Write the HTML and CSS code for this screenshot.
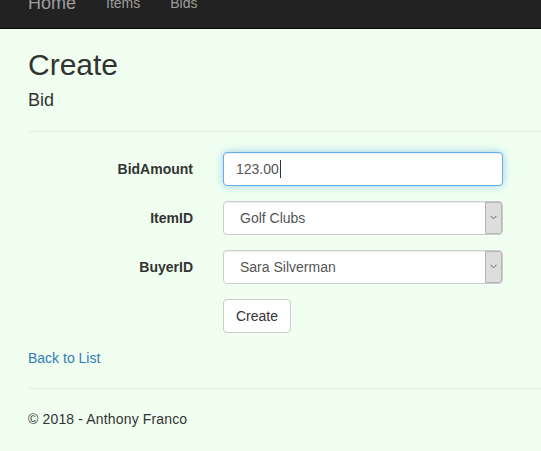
FILE: index.html
```html
<!DOCTYPE html>
<html>
<head>
<meta charset="utf-8">
<title>Create - Bid</title>
<link rel="stylesheet" href="styles.css">
</head>
<body>
<nav class="navbar">
  <a class="brand" href="#">Home</a>
  <a class="nav-link" href="#">Items</a>
  <a class="nav-link" href="#">Bids</a>
</nav>
<main class="content">
  <h2 class="title">Create</h2>
  <h4 class="subtitle">Bid</h4>
  <hr class="rule">
  <form class="form">
    <div class="form-group">
      <label class="control-label">BidAmount</label>
      <div class="field">
        <input class="form-control focused" type="text" value="123.00">
        <span class="caret"></span>
      </div>
    </div>
    <div class="form-group">
      <label class="control-label">ItemID</label>
      <div class="field">
        <select class="form-control select"><option>Golf Clubs</option></select>
        <span class="arrow"><svg width="7" height="5" viewBox="0 0 7 5"><path d="M0.5 0.8 L3.5 3.8 L6.5 0.8" fill="none" stroke="#666" stroke-width="1"/></svg></span>
      </div>
    </div>
    <div class="form-group">
      <label class="control-label">BuyerID</label>
      <div class="field">
        <select class="form-control select"><option>Sara Silverman</option></select>
        <span class="arrow"><svg width="7" height="5" viewBox="0 0 7 5"><path d="M0.5 0.8 L3.5 3.8 L6.5 0.8" fill="none" stroke="#666" stroke-width="1"/></svg></span>
      </div>
    </div>
    <div class="form-group">
      <span class="control-label"></span>
      <div class="field"><button class="btn" type="button">Create</button></div>
    </div>
  </form>
  <div class="back"><a href="#">Back to List</a></div>
  <hr class="rule">
  <footer class="footer"><p>&copy; 2018 - Anthony Franco</p></footer>
</main>
</body>
</html>
```

FILE: styles.css
```css
* { box-sizing: border-box; }
html, body { margin: 0; padding: 0; }
body {
  background: #f0fff0;
  font-family: "Liberation Sans", Arial, Helvetica, sans-serif;
  font-size: 14px;
  line-height: 20px;
  color: #333;
  overflow: hidden;
}
.navbar {
  margin-top: -22px;
  height: 51px;
  background: #222;
  border-bottom: 1px solid #080808;
  display: flex;
  align-items: flex-start;
  padding-left: 13px;
}
.brand {
  font-size: 18px;
  line-height: 20px;
  padding: 15px;
  color: #9d9d9d;
  text-decoration: none;
}
.nav-link {
  font-size: 14px;
  line-height: 20px;
  padding: 15px;
  color: #9d9d9d;
  text-decoration: none;
}
.content {
  padding-left: 28px;
}
.title {
  margin: 19px 0 10px;
  font-size: 30px;
  line-height: 33px;
  font-weight: 500;
}
.subtitle {
  margin: 10px 0 10px;
  font-size: 18px;
  line-height: 19.8px;
  font-weight: 500;
}
.rule {
  margin: 20px 0;
  border: 0;
  border-top: 1px solid #e8eee8;
  height: 0;
}
.form { margin: 0; }
.form-group {
  display: grid;
  grid-template-columns: 165px 280px;
  column-gap: 30px;
  margin-bottom: 15px;
}
.control-label {
  text-align: right;
  font-weight: bold;
  padding-top: 7px;
}
.field { position: relative; }
.form-control {
  display: block;
  width: 280px;
  height: 34px;
  padding: 6px 12px;
  font-family: "Liberation Sans", Arial, sans-serif;
  font-size: 14px;
  color: #555;
  background: #fff;
  border: 1px solid #ccc;
  border-radius: 4px;
  box-shadow: inset 0 1px 1px rgba(0,0,0,.075);
  outline: none;
  margin: 0;
}
.focused {
  border-color: #66afe9;
  box-shadow: inset 0 1px 1px rgba(0,0,0,.075), 0 0 8px rgba(102,175,233,.6);
  caret-color: transparent;
}
.caret {
  position: absolute;
  left: 57px;
  top: 8px;
  width: 1px;
  height: 18px;
  background: #333;
}
.select {
  -webkit-appearance: none;
  appearance: none;
  padding-left: 16px;
}
.arrow {
  position: absolute;
  right: 1px;
  top: 1px;
  width: 17px;
  height: 32px;
  background: #ddd;
  border: 1px solid #b5b5b5;
  border-radius: 0 3px 3px 0;
  display: flex;
  align-items: center;
  justify-content: center;
}
.btn {
  height: 34px;
  padding: 6px 12px;
  font-family: "Liberation Sans", Arial, sans-serif;
  font-size: 14px;
  line-height: 20px;
  color: #333;
  background: #fff;
  border: 1px solid #ccc;
  border-radius: 4px;
}
.back { margin-top: 1px; }
.back a {
  color: #337ab7;
  text-decoration: none;
}
.footer p { margin: 0 0 10px; letter-spacing: 0.15px; }
```
